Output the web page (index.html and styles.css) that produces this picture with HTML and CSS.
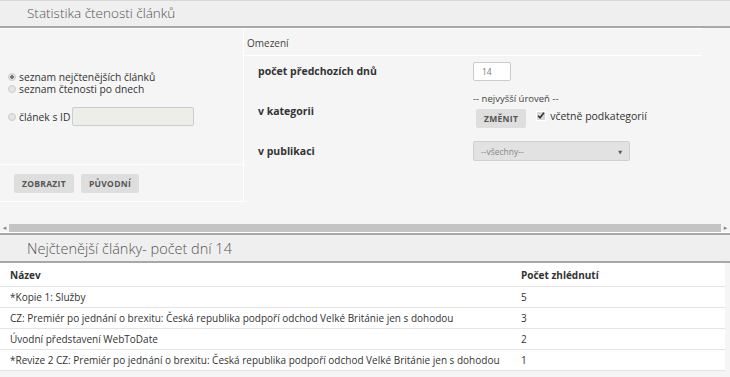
FILE: index.html
```html
<!DOCTYPE html>
<html>
  <head>
    <title>Statistika čtenosti článků</title>
    <link rel="stylesheet" href="styles.css">
  </head>
  <body>
    <div class="page-head">Statistika čtenosti článků</div>
    <div class="filters">
      <div class="mode">
        <div class="mode-choices">
          <label class="choice"><input type="radio" name="mode" checked /> seznam nejčtenějších článků</label>
          <label class="choice"><input type="radio" name="mode" /> seznam čtenosti po dnech</label>
          <label class="choice choice-id"><input type="radio" name="mode" /> článek s ID <input type="text" class="id-input" /></label>
        </div>
        <div class="mode-buttons">
          <button class="btn">ZOBRAZIT</button>
          <button class="btn">PŮVODNÍ</button>
        </div>
      </div>
      <div class="limits">
        <div class="limits-head">Omezení</div>
        <div class="limit-row row-days">
          <div class="limit-label">počet předchozích dnů</div>
          <div class="limit-value"><input type="text" class="days-input" value="14" /></div>
        </div>
        <div class="limit-row row-cat">
          <div class="limit-label">v kategorii</div>
          <div class="limit-value">
            <div class="cat-name">-- nejvyšší úroveň --</div>
            <div class="cat-actions">
              <button class="btn">ZMĚNIT</button>
              <label class="check"><span class="check-box">
                <svg width="9" height="9" viewBox="0 0 9 9"><path d="M1.2 4.8 L3.4 7 L7.8 1.4" fill="none" stroke="#333" stroke-width="1.8"/></svg>
              </span> včetně podkategorií</label>
            </div>
          </div>
        </div>
        <div class="limit-row row-pub">
          <div class="limit-label">v publikaci</div>
          <div class="limit-value">
            <div class="select">--všechny--<span class="select-arrow">▼</span></div>
          </div>
        </div>
      </div>
    </div>
    <div class="hscroll">
      <span class="hscroll-arrow">◂</span>
      <div class="hscroll-track"></div>
      <span class="hscroll-arrow">▸</span>
    </div>
    <div class="section-head">Nejčtenější články- počet dní 14</div>
    <table class="results">
      <thead>
        <tr><th>Název</th><th class="col-count">Počet zhlédnutí</th></tr>
      </thead>
      <tbody>
        <tr><td>*Kopie 1: Služby</td><td>5</td></tr>
        <tr><td>CZ: Premiér po jednání o brexitu: Česká republika podpoří odchod Velké Británie jen s dohodou</td><td>3</td></tr>
        <tr><td>Úvodní představení WebToDate</td><td>2</td></tr>
        <tr><td>*Revize 2 CZ: Premiér po jednání o brexitu: Česká republika podpoří odchod Velké Británie jen s dohodou</td><td>1</td></tr>
      </tbody>
    </table>
  </body>
</html>
```
FILE: styles.css
```css
body {
  margin: 0;
  background-color: #f5f5f5;
  font-family: "Open Sans", "DejaVu Sans", sans-serif;
  font-size: 10px;
  color: #333;
}

.page-head,
.section-head {
  background-color: #efefef;
  color: #555;
  font-size: 13.5px;
  font-weight: 300;
  padding-left: 27px;
  height: 25px;
  line-height: 25px;
}

.page-head {
  border-top: 1px solid #d8d8d8;
  border-bottom: 2px solid #a8a8a8;
}

.section-head {
  border-top: 2px solid #a8a8a8;
  border-bottom: 2px solid #a8a8a8;
  height: 26px;
  line-height: 27px;
  font-size: 14.5px;
}

.filters {
  display: flex;
  height: 195px;
}

.mode {
  width: 243px;
  height: 172px;
  border: 1px solid #fff;
  border-left: none;
  display: flex;
  flex-direction: column;
}

.mode-choices {
  height: 136px;
  border-bottom: 1px solid #fff;
  display: flex;
  flex-direction: column;
  justify-content: center;
  padding-left: 6px;
  padding-top: 4px;
  box-sizing: border-box;
}

.choice {
  display: flex;
  align-items: center;
  gap: 3px;
  height: 12px;
  line-height: 12px;
  font-size: 10.3px;
  color: #333;
}

.choice input[type="radio"] {
  appearance: none;
  margin: 0 0 0 2px;
  width: 8px;
  height: 8px;
  border-radius: 50%;
  border: 1px solid #ccc;
  background: #e4e4e4;
  box-sizing: border-box;
}

.choice input[type="radio"]:checked {
  background: radial-gradient(circle, #777 0 1.6px, #e4e4e4 2px);
}

.choice-id {
  margin-top: 12px;
  height: 20px;
}

.id-input {
  width: 122px;
  height: 19px;
  box-sizing: border-box;
  margin: 0 0 0 -1px;
  border: 1px solid #ccc;
  border-radius: 2px;
  background: #eeeee8;
}

.mode-buttons {
  flex: 1;
  display: flex;
  align-items: center;
  gap: 7px;
  padding-left: 14px;
  padding-top: 1px;
}

.btn {
  background: #dedede;
  border: none;
  border-radius: 2px;
  color: #555;
  font-family: "Open Sans", "DejaVu Sans", sans-serif;
  font-weight: 700;
  font-size: 8.5px;
  letter-spacing: 0.3px;
  height: 19px;
  padding: 0 8px;
}

.limits {
  width: 458px;
  display: flex;
  flex-direction: column;
}

.limits-head {
  height: 26px;
  line-height: 28px;
  padding-left: 3px;
  border-top: 1px solid #fff;
  border-bottom: 1px solid #fff;
  font-size: 10px;
  color: #444;
}

.limit-row {
  display: flex;
  align-items: center;
}

.row-days {
  height: 30px;
}

.row-cat {
  height: 50px;
}

.row-pub {
  height: 30px;
}

.limit-label {
  width: 215px;
  padding-left: 14px;
  font-weight: 700;
  font-size: 10.5px;
  color: #333;
}

.days-input {
  width: 38px;
  height: 19px;
  box-sizing: border-box;
  border: 1px solid #ccc;
  border-radius: 2px;
  background: #fff;
  font-family: "Open Sans", "DejaVu Sans", sans-serif;
  font-size: 8.5px;
  color: #777;
  padding: 0 0 0 8px;
  margin-top: 1px;
}

.cat-name {
  font-size: 9.5px;
  color: #444;
  margin-top: -2px;
}

.cat-actions {
  display: flex;
  align-items: center;
  gap: 10px;
  margin-top: 4px;
  margin-left: 3px;
}

.check {
  display: flex;
  align-items: center;
  gap: 4px;
  font-size: 10.5px;
  color: #333;
  margin-top: -6px;
}

.check-box {
  width: 10px;
  height: 10px;
  border: 1px solid #fff;
  background: #d8d8d8;
  box-sizing: border-box;
  display: flex;
  align-items: center;
  justify-content: center;
}

.select {
  position: relative;
  width: 157px;
  height: 20px;
  line-height: 20px;
  box-sizing: border-box;
  border: 1px solid #d0d0d0;
  border-radius: 2px;
  background: #e2e2e2;
  color: #888;
  font-size: 8.5px;
  padding-left: 7px;
}

.select-arrow {
  position: absolute;
  right: 7px;
  top: 0;
  font-size: 5px;
  color: #555;
}

.hscroll {
  display: flex;
  align-items: center;
  height: 9px;
  border-bottom: 1px solid #fff;
}

.hscroll-arrow {
  width: 9px;
  text-align: center;
  font-size: 7px;
  color: #888;
  line-height: 9px;
}

.hscroll-track {
  flex: 1;
  height: 8px;
  background: #c4c4c4;
}

.results {
  width: 725px;
  border-collapse: collapse;
  background: #fff;
  font-size: 10px;
  color: #333;
}

.results th {
  text-align: left;
  font-weight: 700;
  height: 22px;
  padding: 1px 0 0 10px;
}

.results td {
  height: 20px;
  padding: 0 0 0 10px;
  border-top: 1px solid #e4e4e4;
}

.results tbody tr:last-child td {
  border-bottom: 1px solid #e4e4e4;
}

.col-count {
  width: 204px;
}
```
